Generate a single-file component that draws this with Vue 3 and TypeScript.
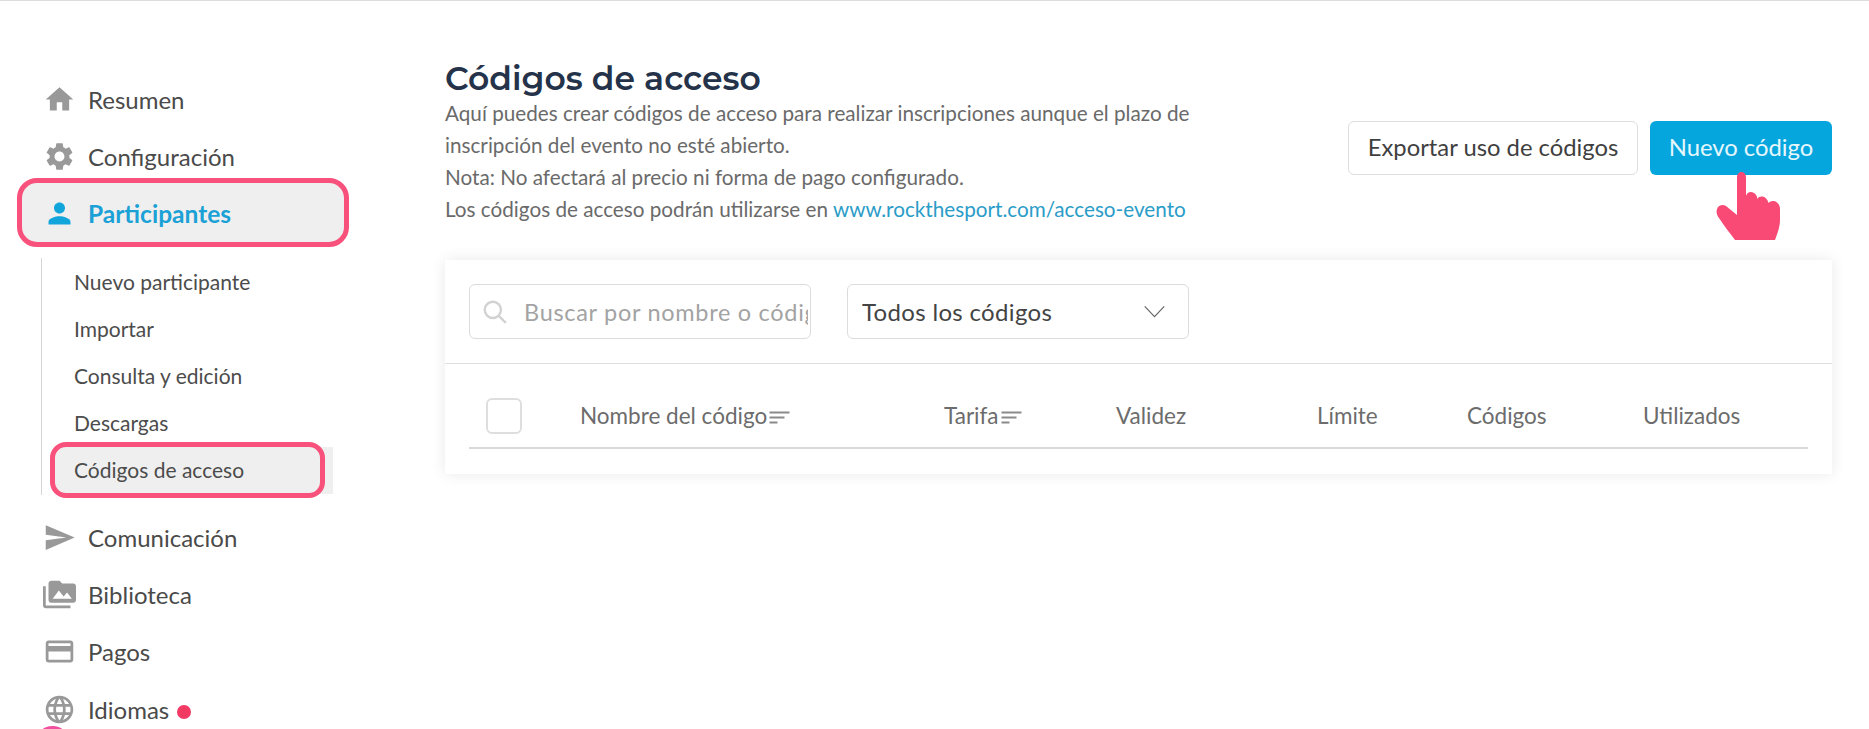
<template>
  <div class="page">
    <aside class="sidebar">
      <nav class="menu">
        <a v-for="item in topItems" :key="item.label" class="menu-item" :class="{ active: item.active }">
          <svg class="menu-icon" viewBox="0 0 24 24"><path :d="item.icon" /></svg>
          <span>{{ item.label }}</span>
          <i v-if="item.active" class="mark"></i>
        </a>
      </nav>

      <ul class="submenu">
        <li v-for="sub in subItems" :key="sub" class="submenu-item" :class="{ current: sub === 'Códigos de acceso' }">
          {{ sub }}
          <i v-if="sub === 'Códigos de acceso'" class="mark mark-sub"></i>
        </li>
      </ul>

      <nav class="menu menu-bottom">
        <a v-for="item in bottomItems" :key="item.label" class="menu-item">
          <svg class="menu-icon" viewBox="0 0 24 24"><path :d="item.icon" /></svg>
          <span>{{ item.label }}</span>
          <i v-if="item.label === 'Idiomas'" class="dot"></i>
        </a>
      </nav>
      <i class="bottom-blob"></i>
    </aside>

    <main class="content">
      <header class="head">
        <div class="head-text">
          <h1>Códigos de acceso</h1>
          <p>Aquí puedes crear códigos de acceso para realizar inscripciones aunque el plazo de<br />inscripción del evento no esté abierto.</p>
          <p>Nota: No afectará al precio ni forma de pago configurado.</p>
          <p>Los códigos de acceso podrán utilizarse en <a class="link">www.rockthesport.com/acceso-evento</a></p>
        </div>
        <div class="actions">
          <button class="btn btn-light">Exportar uso de códigos</button>
          <button class="btn btn-primary">
            Nuevo código
            <svg class="hand" viewBox="0 0 64 68">
              <path d="M21 5C21 2 23 0 25.500 0S30 2 30 5V24C31 20 35 19 38 21C40 22 41 24 41.500 27C43 24 47 24 49.500 26C51 27 52 29 52.500 31C54 29 58 28 61 30.500C63 32 64 34 64 37V48C64 54 62 60 59 68H19C14 61 8 54 3 46C0 42 0 38 2 35C4 33 7 32 10 34L21 43Z" fill="#f94a75" />
            </svg>
          </button>
        </div>
      </header>

      <section class="card">
        <div class="filters">
          <label class="search">
            <svg class="search-icon" viewBox="0 0 24 24"><circle cx="10" cy="10" r="7.5" /><path d="M15.500 15.500L22 22" /></svg>
            <input type="text" placeholder="Buscar por nombre o código" />
          </label>
          <div class="select">
            <span>Todos los códigos</span>
            <svg class="chevron" viewBox="0 0 24 14"><path d="M1.500 1.500L12 12.500 22.500 1.500" /></svg>
          </div>
        </div>

        <div class="table-head">
          <span class="check"></span>
          <span v-for="col in columns" :key="col.label" class="col" :class="{ sortable: col.sort }">
            {{ col.label }}
            <svg v-if="col.sort" class="sort" viewBox="0 0 20 14"><path d="M0 1.500H20M0 6.500H15M0 11.500H8" /></svg>
          </span>
        </div>
      </section>
    </main>
  </div>
</template>

<script setup lang="ts">
interface MenuItem {
  label: string
  icon: string
  active?: boolean
}

const topItems: MenuItem[] = [
  { label: 'Resumen', icon: 'M10 20v-6h4v6h5v-8h3L12 3 2 12h3v8z' },
  {
    label: 'Configuración',
    icon: 'M19.14 12.94c.04-.3.06-.61.06-.94 0-.32-.02-.64-.07-.94l2.03-1.58c.18-.14.23-.41.12-.61l-1.92-3.32c-.12-.22-.37-.29-.59-.22l-2.39.96c-.5-.38-1.03-.7-1.62-.94l-.36-2.54c-.04-.24-.24-.41-.48-.41h-3.84c-.24 0-.43.17-.47.41l-.36 2.54c-.59.24-1.13.57-1.62.94l-2.39-.96c-.22-.08-.47 0-.59.22L2.74 8.87c-.12.21-.08.47.12.61l2.03 1.58c-.05.3-.09.63-.09.94s.02.64.07.94l-2.03 1.58c-.18.14-.23.41-.12.61l1.92 3.32c.12.22.37.29.59.22l2.39-.96c.5.38 1.03.7 1.62.94l.36 2.54c.05.24.24.41.48.41h3.84c.24 0 .44-.17.47-.41l.36-2.54c.59-.24 1.13-.56 1.62-.94l2.39.96c.22.08.47 0 .59-.22l1.92-3.32c.12-.22.07-.47-.12-.61l-2.01-1.58zM12 15.6c-1.98 0-3.6-1.62-3.6-3.6s1.62-3.6 3.6-3.6 3.6 1.62 3.6 3.6-1.62 3.6-3.6 3.6z'
  },
  {
    label: 'Participantes',
    active: true,
    icon: 'M12 12c2.21 0 4-1.79 4-4s-1.79-4-4-4-4 1.79-4 4 1.79 4 4 4zm0 2c-2.67 0-8 1.34-8 4v2h16v-2c0-2.66-5.33-4-8-4z'
  }
]

const subItems = ['Nuevo participante', 'Importar', 'Consulta y edición', 'Descargas', 'Códigos de acceso']

const bottomItems: MenuItem[] = [
  { label: 'Comunicación', icon: 'M2.01 21L23 12 2.01 3 2 10l15 2-15 2z' },
  {
    label: 'Biblioteca',
    icon: 'M2 6H0v5h.01L0 20c0 1.1.9 2 2 2h18v-2H2V6zm20-2h-8l-2-2H6c-1.1 0-1.99.9-1.99 2L4 16c0 1.1.9 2 2 2h16c1.1 0 2-.9 2-2V6c0-1.1-.9-2-2-2zM7 15l4.5-6 3.5 4.51 2.5-3.01L21 15H7z'
  },
  {
    label: 'Pagos',
    icon: 'M20 4H4c-1.11 0-1.99.89-1.99 2L2 18c0 1.11.89 2 2 2h16c1.11 0 2-.89 2-2V6c0-1.11-.89-2-2-2zm0 14H4v-6h16v6zm0-10H4V6h16v2z'
  },
  {
    label: 'Idiomas',
    icon: 'M11.99 2C6.47 2 2 6.48 2 12s4.47 10 9.99 10C17.52 22 22 17.52 22 12S17.52 2 11.99 2zm6.93 6h-2.95c-.32-1.25-.78-2.45-1.38-3.56 1.84.63 3.37 1.91 4.33 3.56zM12 4.04c.83 1.2 1.48 2.53 1.91 3.96h-3.82c.43-1.43 1.08-2.76 1.91-3.96zM4.26 14C4.1 13.36 4 12.69 4 12s.1-1.36.26-2h3.38c-.08.66-.14 1.32-.14 2 0 .68.06 1.34.14 2H4.26zm.82 2h2.95c.32 1.25.78 2.45 1.38 3.56-1.84-.63-3.37-1.9-4.33-3.56zm2.95-8H5.08c.96-1.66 2.49-2.93 4.33-3.56C8.81 5.55 8.35 6.75 8.03 8zM12 19.96c-.83-1.2-1.48-2.53-1.91-3.96h3.82c-.43 1.43-1.08 2.76-1.91 3.96zM14.34 14H9.66c-.09-.66-.16-1.32-.16-2 0-.68.07-1.35.16-2h4.68c.09.65.16 1.32.16 2 0 .68-.07 1.34-.16 2zm.25 5.56c.6-1.11 1.06-2.31 1.38-3.56h2.95c-.96 1.65-2.49 2.93-4.33 3.56zM16.36 14c.08-.66.14-1.32.14-2 0-.68-.06-1.34-.14-2h3.38c.16.64.26 1.31.26 2s-.1 1.36-.26 2h-3.38z'
  }
]

const columns = [
  { label: 'Nombre del código', sort: true },
  { label: 'Tarifa', sort: true },
  { label: 'Validez', sort: false },
  { label: 'Límite', sort: false },
  { label: 'Códigos', sort: false },
  { label: 'Utilizados', sort: false }
]
</script>

<style>
html,
body {
  margin: 0;
  background: #fff;
  overflow: hidden;
}
</style>

<style scoped>
.page {
  display: flex;
  height: 729px;
  box-sizing: border-box;
  border-top: 1px solid #dcdcdc;
  overflow: hidden;
  position: relative;
  isolation: isolate;
  font-family: Lato, "Liberation Sans", sans-serif;
  color: #4a4a4a;
}

.sidebar {
  width: 445px;
  flex: none;
  padding-top: 70px;
  box-sizing: border-box;
}

.menu {
  display: flex;
  flex-direction: column;
}

.menu-item {
  position: relative;
  display: flex;
  align-items: center;
  gap: 12px;
  height: 57px;
  width: 325px;
  padding-left: 43px;
  box-sizing: border-box;
  font-size: 24px;
  color: #4a4a4a;
}

.menu-item.active {
  color: #1ba1d6;
  font-weight: 700;
  font-size: 24.5px;
}

.menu-icon {
  width: 33px;
  height: 33px;
  flex: none;
  fill: #999;
}

.active .menu-icon {
  fill: #11a5dc;
}

.mark {
  position: absolute;
  left: 17px;
  right: -24px;
  top: -7px;
  bottom: -5px;
  z-index: -1;
  background: #efefef;
  border: 5px solid #f8517c;
  border-radius: 20px;
}

.submenu {
  list-style: none;
  margin: 16px 0 0 41px;
  padding: 0 0 2px 32px;
  width: 260px;
  border-left: 1px solid #d6d6d6;
}

.submenu-item {
  position: relative;
  height: 47px;
  display: flex;
  align-items: center;
  padding-bottom: 1px;
  box-sizing: border-box;
  font-size: 21px;
  color: #4c4c4c;
}

.submenu-item.current::before {
  content: "";
  position: absolute;
  left: -18px;
  top: 1px;
  width: 277px;
  bottom: -1px;
  background: #efefef;
  z-index: -2;
}

.mark-sub {
  left: -24px;
  right: 9px;
  top: -4px;
  bottom: -5px;
  border-radius: 16px;
}

.menu-bottom {
  margin-top: 14px;
}

.menu-bottom .menu-item {
  height: 57.200px;
}

.dot {
  width: 14px;
  height: 14px;
  margin-left: -4px;
  margin-top: 6px;
  border-radius: 50%;
  background: #f33a63;
}

.bottom-blob {
  position: absolute;
  left: 35px;
  top: 725px;
  width: 35px;
  height: 35px;
  border-radius: 50%;
  background: #f04fa0;
}

.content {
  width: 1387px;
  flex: none;
}

.head {
  display: flex;
  justify-content: space-between;
  height: 259px;
  box-sizing: border-box;
  padding-top: 59px;
}

h1 {
  margin: 0;
  font-family: Montserrat, Inter, "Open Sans", sans-serif;
  font-size: 33px;
  line-height: 36px;
  font-weight: 600;
  color: #25334a;
}

p {
  margin: 0;
  font-size: 20.700px;
  line-height: 32px;
  color: #6a6a6a;
}

.head-text p:first-of-type {
  margin-top: 1px;
}

.link {
  color: #2a9cc8;
}

.actions {
  display: flex;
  gap: 12px;
  padding-top: 61px;
  align-items: flex-start;
}

.btn {
  position: relative;
  height: 54px;
  box-sizing: border-box;
  border-radius: 6px;
  padding: 0 0 2px;
  font-family: inherit;
  font-size: 23.800px;
}

.btn-light {
  width: 290px;
  background: #fff;
  border: 1px solid #dedede;
  color: #3f3f3f;
}

.btn-primary {
  width: 182px;
  background: #05a6de;
  border: none;
  color: #e6f7fd;
}

.hand {
  position: absolute;
  left: 66px;
  top: 51px;
  width: 64px;
  height: 68px;
}

.card {
  background: #fff;
  height: 214px;
  box-shadow: 0 0 14px rgba(0, 0, 0, 0.09);
}

.filters {
  display: flex;
  gap: 36px;
  height: 104px;
  padding: 24px 24px 0;
  box-sizing: border-box;
  border-bottom: 1px solid #dedede;
}

.search,
.select {
  display: flex;
  align-items: center;
  width: 342px;
  height: 55px;
  box-sizing: border-box;
  border: 1px solid #dcdcdc;
  border-radius: 6px;
}

.search {
  gap: 16px;
  padding: 0 2px 0 12px;
}

.search-icon {
  width: 26px;
  height: 26px;
  flex: none;
  fill: none;
  stroke: #d2d2d2;
  stroke-width: 2.200;
}

.search input {
  flex: 1;
  min-width: 0;
  border: none;
  outline: none;
  padding: 0;
  background: none;
  font-family: inherit;
  font-size: 23.500px;
  letter-spacing: 0.7px;
}

.search input::placeholder {
  color: #a3a3a3;
  opacity: 1;
}

.select {
  justify-content: space-between;
  padding: 0 22px 0 14px;
  font-size: 24px;
  letter-spacing: 0.33px;
  color: #444;
}

.chevron {
  width: 23px;
  height: 13px;
  fill: none;
  stroke: #666;
  stroke-width: 1.300;
}

.table-head {
  display: grid;
  grid-template-columns: 94px 364px 172px 201px 150px 176px 1fr;
  align-items: center;
  height: 85px;
  margin: 0 24px;
  padding: 20px 0 0 17px;
  box-sizing: border-box;
  border-bottom: 2px solid #d9d9d9;
  font-size: 22.500px;
  color: #6c6c6c;
}

.check {
  width: 36px;
  height: 36px;
  box-sizing: border-box;
  border: 2px solid #dedede;
  border-radius: 6px;
}

.col {
  display: flex;
  align-items: center;
  white-space: nowrap;
}

.sort {
  width: 21px;
  height: 14px;
  margin-left: 2px;
  margin-top: 4px;
  fill: none;
  stroke: #8a8a8a;
  stroke-width: 1.800;
}
</style>
